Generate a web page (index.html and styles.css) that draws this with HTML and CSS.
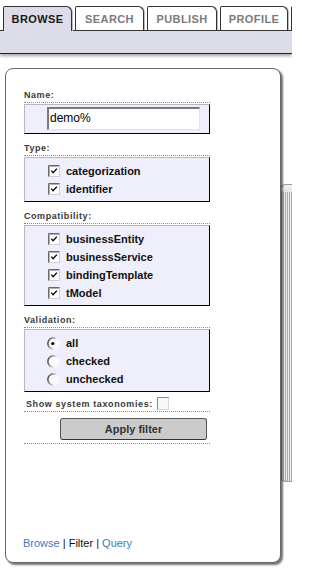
FILE: index.html
```html
<!DOCTYPE html>
<html>
<head>
<meta charset="utf-8">
<link rel="stylesheet" href="styles.css">
</head>
<body>
<svg class="defs" width="0" height="0" aria-hidden="true">
  <defs>
    <linearGradient id="rg" x1="0" y1="0.2" x2="1" y2="0.5">
      <stop offset="0" stop-color="#444"/>
      <stop offset="0.45" stop-color="#b4b4b4"/>
      <stop offset="0.75" stop-color="#fafafa"/>
      <stop offset="1" stop-color="#fafafa"/>
    </linearGradient>
  </defs>
</svg>
<div class="tabbar">
  <div class="tabs">
    <div class="tab active">BROWSE</div>
    <div class="tab">SEARCH</div>
    <div class="tab wide">PUBLISH</div>
    <div class="tab narrow">PROFILE</div>
    <div class="tab"></div>
  </div>
  <div class="bar"></div>
</div>
<div class="stage">
  <div class="track"></div>
  <div class="panel">
    <div class="content">
      <div class="label first">Name:</div>
      <div class="box namebox"><div class="input">demo%</div></div>

      <div class="label">Type:</div>
      <div class="box list">
        <div class="item"><svg class="cb" width="12" height="12" viewBox="0 0 12 12"><rect x="0.5" y="0.5" width="11" height="11" fill="#fff" stroke="#d0d0d0"/><path d="M0.5 11.5V0.5H11.5" fill="none" stroke="#6a6a6a"/><path d="M1.5 11V1.5H11" fill="none" stroke="#b0b0b0"/><path d="M3.3 5.6L5.1 7.8L8.9 3.6" fill="none" stroke="#000" stroke-width="1.3"/></svg><span>categorization</span></div>
        <div class="item"><svg class="cb" width="12" height="12" viewBox="0 0 12 12"><rect x="0.5" y="0.5" width="11" height="11" fill="#fff" stroke="#d0d0d0"/><path d="M0.5 11.5V0.5H11.5" fill="none" stroke="#6a6a6a"/><path d="M1.5 11V1.5H11" fill="none" stroke="#b0b0b0"/><path d="M3.3 5.6L5.1 7.8L8.9 3.6" fill="none" stroke="#000" stroke-width="1.3"/></svg><span>identifier</span></div>
      </div>

      <div class="label">Compatibility:</div>
      <div class="box list">
        <div class="item"><svg class="cb" width="12" height="12" viewBox="0 0 12 12"><rect x="0.5" y="0.5" width="11" height="11" fill="#fff" stroke="#d0d0d0"/><path d="M0.5 11.5V0.5H11.5" fill="none" stroke="#6a6a6a"/><path d="M1.5 11V1.5H11" fill="none" stroke="#b0b0b0"/><path d="M3.3 5.6L5.1 7.8L8.9 3.6" fill="none" stroke="#000" stroke-width="1.3"/></svg><span>businessEntity</span></div>
        <div class="item"><svg class="cb" width="12" height="12" viewBox="0 0 12 12"><rect x="0.5" y="0.5" width="11" height="11" fill="#fff" stroke="#d0d0d0"/><path d="M0.5 11.5V0.5H11.5" fill="none" stroke="#6a6a6a"/><path d="M1.5 11V1.5H11" fill="none" stroke="#b0b0b0"/><path d="M3.3 5.6L5.1 7.8L8.9 3.6" fill="none" stroke="#000" stroke-width="1.3"/></svg><span>businessService</span></div>
        <div class="item"><svg class="cb" width="12" height="12" viewBox="0 0 12 12"><rect x="0.5" y="0.5" width="11" height="11" fill="#fff" stroke="#d0d0d0"/><path d="M0.5 11.5V0.5H11.5" fill="none" stroke="#6a6a6a"/><path d="M1.5 11V1.5H11" fill="none" stroke="#b0b0b0"/><path d="M3.3 5.6L5.1 7.8L8.9 3.6" fill="none" stroke="#000" stroke-width="1.3"/></svg><span>bindingTemplate</span></div>
        <div class="item"><svg class="cb" width="12" height="12" viewBox="0 0 12 12"><rect x="0.5" y="0.5" width="11" height="11" fill="#fff" stroke="#d0d0d0"/><path d="M0.5 11.5V0.5H11.5" fill="none" stroke="#6a6a6a"/><path d="M1.5 11V1.5H11" fill="none" stroke="#b0b0b0"/><path d="M3.3 5.6L5.1 7.8L8.9 3.6" fill="none" stroke="#000" stroke-width="1.3"/></svg><span>tModel</span></div>
      </div>

      <div class="label">Validation:</div>
      <div class="box list">
        <div class="item"><svg class="rb" width="13" height="13" viewBox="0 0 13 13"><circle cx="6.5" cy="6.5" r="5.6" fill="#fafafa" stroke="url(#rg)" stroke-width="1.6"/><circle cx="5.8" cy="6.5" r="1.6" fill="#000"/></svg><span>all</span></div>
        <div class="item"><svg class="rb" width="13" height="13" viewBox="0 0 13 13"><circle cx="6.5" cy="6.5" r="5.6" fill="#fafafa" stroke="url(#rg)" stroke-width="1.6"/></svg><span>checked</span></div>
        <div class="item"><svg class="rb" width="13" height="13" viewBox="0 0 13 13"><circle cx="6.5" cy="6.5" r="5.6" fill="#fafafa" stroke="url(#rg)" stroke-width="1.6"/></svg><span>unchecked</span></div>
      </div>

      <div class="sysrow">
        <span class="syslabel">Show system taxonomies:</span>
        <svg class="cb" width="12" height="13" viewBox="0 0 12 13"><rect x="0.5" y="0.5" width="11" height="12" fill="#f8f8f8" stroke="#d8d8d8"/><path d="M0.5 12.5V0.5H11.5" fill="none" stroke="#8a8a8a"/></svg>
      </div>

      <div class="btnrow">
        <div class="button">Apply filter</div>
      </div>
    </div>
    <div class="links"><a class="link">Browse</a> | Filter | <a class="link">Query</a></div>
  </div>
</div>
</body>
</html>
```
FILE: styles.css
```css
html, body {
  margin: 0;
  padding: 0;
  overflow: hidden;
}
body {
  width: 292px;
  height: 583px;
  background: #fff;
  font-family: "Liberation Sans", Arial, sans-serif;
  color: #111;
}
.defs {
  position: absolute;
  width: 0;
  height: 0;
}

/* tabs */
.tabbar {
  padding: 6px 0 5px 0;
  margin-bottom: -5px;
  overflow: hidden;
}
.tabs {
  display: flex;
  align-items: flex-start;
  gap: 3px;
  padding-left: 3px;
  height: 24px;
  position: relative;
  z-index: 2;
}
.tab {
  flex: none;
  width: 69px;
  height: 24px;
  box-sizing: border-box;
  border: 1px solid #333;
  border-bottom: none;
  border-radius: 2px 6px 0 0;
  background: #fff;
  color: #7b7b7b;
  font-weight: bold;
  font-size: 11px;
  letter-spacing: 0.4px;
  line-height: 25px;
  text-align: center;
  box-shadow: 1px 0 0 #bbb;
}
.tab.wide { width: 70px; }
.tab.narrow { width: 68px; }
.tab.active {
  height: 25px;
  background: #dddde9;
  color: #1a1a1a;
}
.bar {
  height: 22px;
  border-top: 1px solid #333;
  border-bottom: 1px solid #222;
  background: #dddde9;
  box-shadow: 0 2px 3px rgba(0, 0, 0, 0.35);
  position: relative;
  z-index: 1;
}

/* stage */
.stage {
  position: relative;
  overflow: hidden;
  padding-bottom: 6px;
}
.track {
  position: absolute;
  left: 279px;
  top: 130px;
  width: 13px;
  height: 298px;
  box-sizing: border-box;
  border: 1px solid #9a9a9a;
  border-right: none;
  border-radius: 7px 0 0 7px;
  background:
    linear-gradient(#f2f2f2, #e4e4e4) top / 100% 7px no-repeat,
    repeating-linear-gradient(90deg, #efefef 0 1px, #a8a8a8 1px 2px);
  z-index: 0;
}
.panel {
  position: relative;
  z-index: 1;
  margin: 14px 0 0 5px;
  width: 276px;
  height: 495px;
  box-sizing: border-box;
  border: 1px solid #666;
  border-radius: 8px;
  background: #fff;
  box-shadow: 2px 2px 2px rgba(0, 0, 0, 0.55);
  display: flex;
  flex-direction: column;
}
.content {
  padding: 0 0 0 18px;
  width: 186px;
}

/* section labels */
.label {
  margin-top: 8px;
  font-size: 9px;
  line-height: 12px;
  font-weight: bold;
  letter-spacing: 0.55px;
  color: #3a3a3a;
  padding-bottom: 1px;
  border-bottom: 1px dotted #8a8a8a;
}
.label.first {
  margin-top: 20px;
}

/* boxes */
.box {
  margin-top: 1px;
  background: #efeffb;
  border-style: solid;
  border-width: 1px;
  border-color: #b8b8c4 #000 #000 #b8b8c4;
}
.namebox {
  padding: 2px 0 3px 22px;
}
.input {
  width: 153px;
  height: 23px;
  box-sizing: border-box;
  background: #fff;
  border-style: solid;
  border-width: 2px 1px 1px 2px;
  border-color: #7a7a7a #e2e2e2 #e2e2e2 #7a7a7a;
  font-size: 12px;
  line-height: 19px;
  padding-left: 1px;
  color: #000;
}
.list {
  padding: 4px 0 3px 0;
}
.item {
  display: flex;
  align-items: center;
  gap: 6px;
  height: 18px;
  padding-left: 23px;
  font-size: 11px;
  font-weight: bold;
  color: #111;
}
.item .rb {
  margin-left: -1px;
}
.cb, .rb {
  flex: none;
  display: block;
}

/* system taxonomies row */
.sysrow {
  margin-top: 4px;
  height: 15px;
  display: flex;
  align-items: center;
  gap: 4px;
  padding-left: 2px;
  border-bottom: 1px dotted #8a8a8a;
}
.syslabel {
  font-size: 9px;
  font-weight: bold;
  letter-spacing: 0.6px;
  color: #3a3a3a;
}

/* button */
.btnrow {
  padding: 6px 0 3px 36px;
  border-bottom: 1px dotted #8a8a8a;
}
.button {
  width: 147px;
  height: 22px;
  box-sizing: border-box;
  background: #cbcbcb;
  border: 1px solid #555;
  border-bottom-color: #333;
  border-radius: 3px;
  font-size: 11px;
  font-weight: bold;
  line-height: 20px;
  text-align: center;
  color: #333;
}

/* bottom links */
.links {
  margin-top: auto;
  padding: 0 0 12px 17px;
  font-size: 11px;
  line-height: 14px;
  color: #111;
}
.link {
  color: #3e7cb8;
  text-decoration: none;
}
```
